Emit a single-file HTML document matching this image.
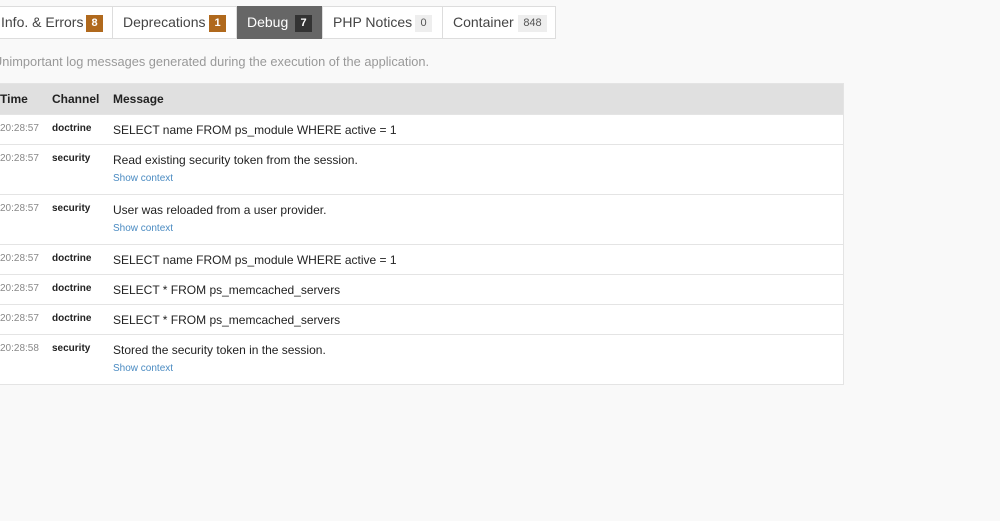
<!DOCTYPE html><html><head><style>
body{margin:0;width:1000px;height:521px;background:#f9f9f9;font-family:"Liberation Sans",sans-serif;position:relative;overflow:hidden;color:#222}
.a{position:absolute;white-space:nowrap}
.tabs{position:absolute;left:-10px;top:6px;height:33px;width:566px;background:#fff;border:1px solid #ddd;box-sizing:border-box}
.tab{position:absolute;top:0;height:31px;line-height:31px;font-size:14px;color:#444;border-right:1px solid #ddd;box-sizing:border-box}
.b{position:absolute;top:8px;height:17px;line-height:17px;font-size:11px;font-weight:bold;text-align:center;color:#fff;background:#b0691d}
table{position:absolute;left:-11px;top:83px;width:855px;border-collapse:collapse;background:#fff;font-size:12px;border:1px solid #e4e4e4}
th{background:#e0e0e0;height:30px;text-align:left;font-size:12px;padding:0}
td{border-top:1px solid #e4e4e4;vertical-align:top;padding:0}
.t{color:#888;font-size:10px;padding:8px 0 0 10px;width:52px}
.c{font-weight:bold;font-size:10px;padding-top:8px;width:61px}
.m{padding-top:8px;height:21px}
.s{color:#4a8bc2;font-size:10px;margin-top:6px;margin-bottom:10px}
</style></head><body>
<div class="tabs">
<div class="tab" style="left:0;width:122px"><span class="a" style="left:10px">Info. &amp; Errors</span><span class="b" style="left:95px;width:17px">8</span></div>
<div class="tab" style="left:122px;width:124px"><span class="a" style="left:10px">Deprecations</span><span class="b" style="left:96px;width:17px">1</span></div>
<div class="tab" style="left:246px;width:86px;background:#666;color:#fff;height:33px;top:-1px"><span class="a" style="left:10px;top:1px">Debug</span><span class="b" style="left:58px;width:17px;background:#333;top:9px">7</span></div>
<div class="tab" style="left:332px;width:120px"><span class="a" style="left:10px">PHP Notices</span><span class="b" style="left:92px;width:17px;background:#eee;color:#555;font-weight:normal">0</span></div>
<div class="tab" style="left:452px;width:112px;border:0"><span class="a" style="left:10px">Container</span><span class="b" style="left:75px;width:29px;background:#eee;color:#555;font-weight:normal">848</span></div>
</div>
<div class="a" style="left:-7px;top:54px;font-size:12.8px;color:#999">Unimportant log messages generated during the execution of the application.</div>
<table>
<tr><th style="padding-left:10px">Time</th><th>Channel</th><th>Message</th></tr>
<tr><td class="t">20:28:57</td><td class="c">doctrine</td><td class="m">SELECT name FROM ps_module WHERE active = 1</td></tr>
<tr><td class="t">20:28:57</td><td class="c">security</td><td class="m">Read existing security token from the session.<div class="s">Show context</div></td></tr>
<tr><td class="t">20:28:57</td><td class="c">security</td><td class="m">User was reloaded from a user provider.<div class="s">Show context</div></td></tr>
<tr><td class="t">20:28:57</td><td class="c">doctrine</td><td class="m">SELECT name FROM ps_module WHERE active = 1</td></tr>
<tr><td class="t">20:28:57</td><td class="c">doctrine</td><td class="m">SELECT * FROM ps_memcached_servers</td></tr>
<tr><td class="t">20:28:57</td><td class="c">doctrine</td><td class="m">SELECT * FROM ps_memcached_servers</td></tr>
<tr><td class="t">20:28:58</td><td class="c">security</td><td class="m">Stored the security token in the session.<div class="s">Show context</div></td></tr>
</table>
</body></html>
